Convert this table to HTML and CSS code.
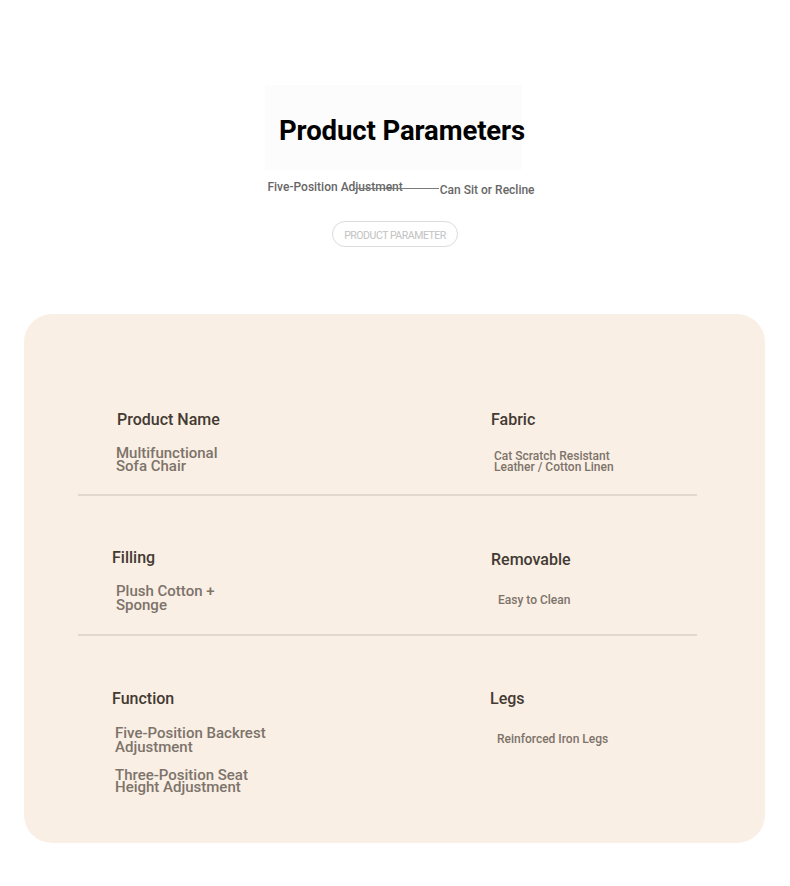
FILE: index.html
```html
<!DOCTYPE html>
<html lang="en">
<head>
<meta charset="utf-8">
<title>Product Parameters</title>
<link rel="stylesheet" href="styles.css">
</head>
<body>
<header class="head">
  <div class="title-box"><h1 class="title">Product Parameters</h1></div>
  <div class="sub">
    <span class="sub-a">Five-Position Adjustment</span>
    <span class="sub-b">Can Sit or Recline</span>
    <span class="sub-line"></span>
  </div>
  <div class="pill">PRODUCT PARAMETER</div>
</header>

<section class="card">
  <div class="row row-1">
    <div class="cell left">
      <div class="label l-a">Product Name</div>
      <div class="val big v-a">Multifunctional<br>Sofa Chair</div>
    </div>
    <div class="cell right">
      <div class="label">Fabric</div>
      <div class="val small v-b">Cat Scratch Resistant<br>Leather / Cotton Linen</div>
    </div>
  </div>
  <div class="row row-2">
    <div class="cell left">
      <div class="label">Filling</div>
      <div class="val big v-c">Plush Cotton +<br>Sponge</div>
    </div>
    <div class="cell right">
      <div class="label l-d">Removable</div>
      <div class="val small v-d">Easy to Clean</div>
    </div>
  </div>
  <div class="row row-3">
    <div class="cell left">
      <div class="label">Function</div>
      <div class="val big v-e">Five-Position Backrest<br>Adjustment</div>
      <div class="val big v-f">Three-Position Seat<br>Height Adjustment</div>
    </div>
    <div class="cell right">
      <div class="label l-g">Legs</div>
      <div class="val small v-g">Reinforced Iron Legs</div>
    </div>
  </div>
</section>
</body>
</html>
```

FILE: styles.css
```css
* { box-sizing: border-box; }
html, body { margin: 0; padding: 0; background: #ffffff; }
body {
  font-family: Roboto, "Liberation Sans", Arial, sans-serif;
  width: 790px;
  padding-bottom: 43px;
}

.head {
  display: flex;
  flex-direction: column;
  align-items: center;
  padding-top: 85px;
}
.title-box {
  width: 257px;
  height: 85px;
  margin-left: -3px;
  background: #fcfcfc;
  display: flex;
  align-items: center;
  justify-content: flex-start;
  padding: 6px 0 0 14px;
}
.title {
  margin: 0;
  font-size: 27.5px;
  font-weight: 700;
  line-height: 30px;
  color: #000;
  white-space: nowrap;
  letter-spacing: -0.1px;
}
.sub {
  position: relative;
  display: flex;
  align-items: flex-start;
  margin-left: 12px;
  margin-top: 10px;
  height: 34px;
  font-size: 12px;
  color: #676767;
  font-weight: 500;
}
.sub-a { line-height: 14px; }
.sub-b { line-height: 14px; margin-left: 37px; margin-top: 3px; }
.sub-line {
  position: absolute;
  left: 87px;
  top: 8px;
  width: 85px;
  height: 1px;
  background: #7a7a7a;
}
.pill {
  margin-top: 7px;
  height: 26px;
  width: 126px;
  border: 1px solid #dcdcdc;
  border-radius: 13px;
  font-size: 10.5px;
  letter-spacing: -0.45px;
  color: #c2c2c2;
  display: flex;
  align-items: center;
  justify-content: center;
  padding-top: 2px;
}

.card {
  margin: 67px 0 0 24px;
  width: 741px;
  height: 529px;
  background: #f9efe4;
  border-radius: 28px;
  padding: 96px 68px 0 54px;
}
.row {
  display: grid;
  grid-template-columns: 412px 1fr;
  border-bottom: 2px solid #e3d8cb;
}
.row-1 { padding-bottom: 21px; }
.row-2 { padding-top: 52px; padding-bottom: 22px; }
.row-3 { padding-top: 53px; border-bottom: 0; }

.cell { display: flex; flex-direction: column; align-items: flex-start; }
.left { padding-left: 34px; }
.right { padding-left: 1px; }

.label {
  font-size: 16px;
  font-weight: 500;
  line-height: 20px;
  color: #433a33;
}
.l-a { margin-left: 5px; }
.l-d { margin-top: 2px; }
.l-g { margin-left: -1px; }

.val {
  color: #7d736b;
  font-weight: 500;
}
.big { font-size: 15px; line-height: 13px; }
.small { font-size: 12px; line-height: 11px; }

.v-a { margin: 17px 0 0 4px; }
.v-b { margin: 21px 0 0 3px; }
.v-c { margin: 16px 0 0 4px; line-height: 14px; }
.v-d { margin: 23px 0 0 7px; line-height: 14px; }
.v-e { margin: 17px 0 0 3px; line-height: 14px; }
.v-f { margin: 15px 0 0 3px; line-height: 12px; }
.v-g { margin: 23px 0 0 6px; line-height: 14px; }
```
